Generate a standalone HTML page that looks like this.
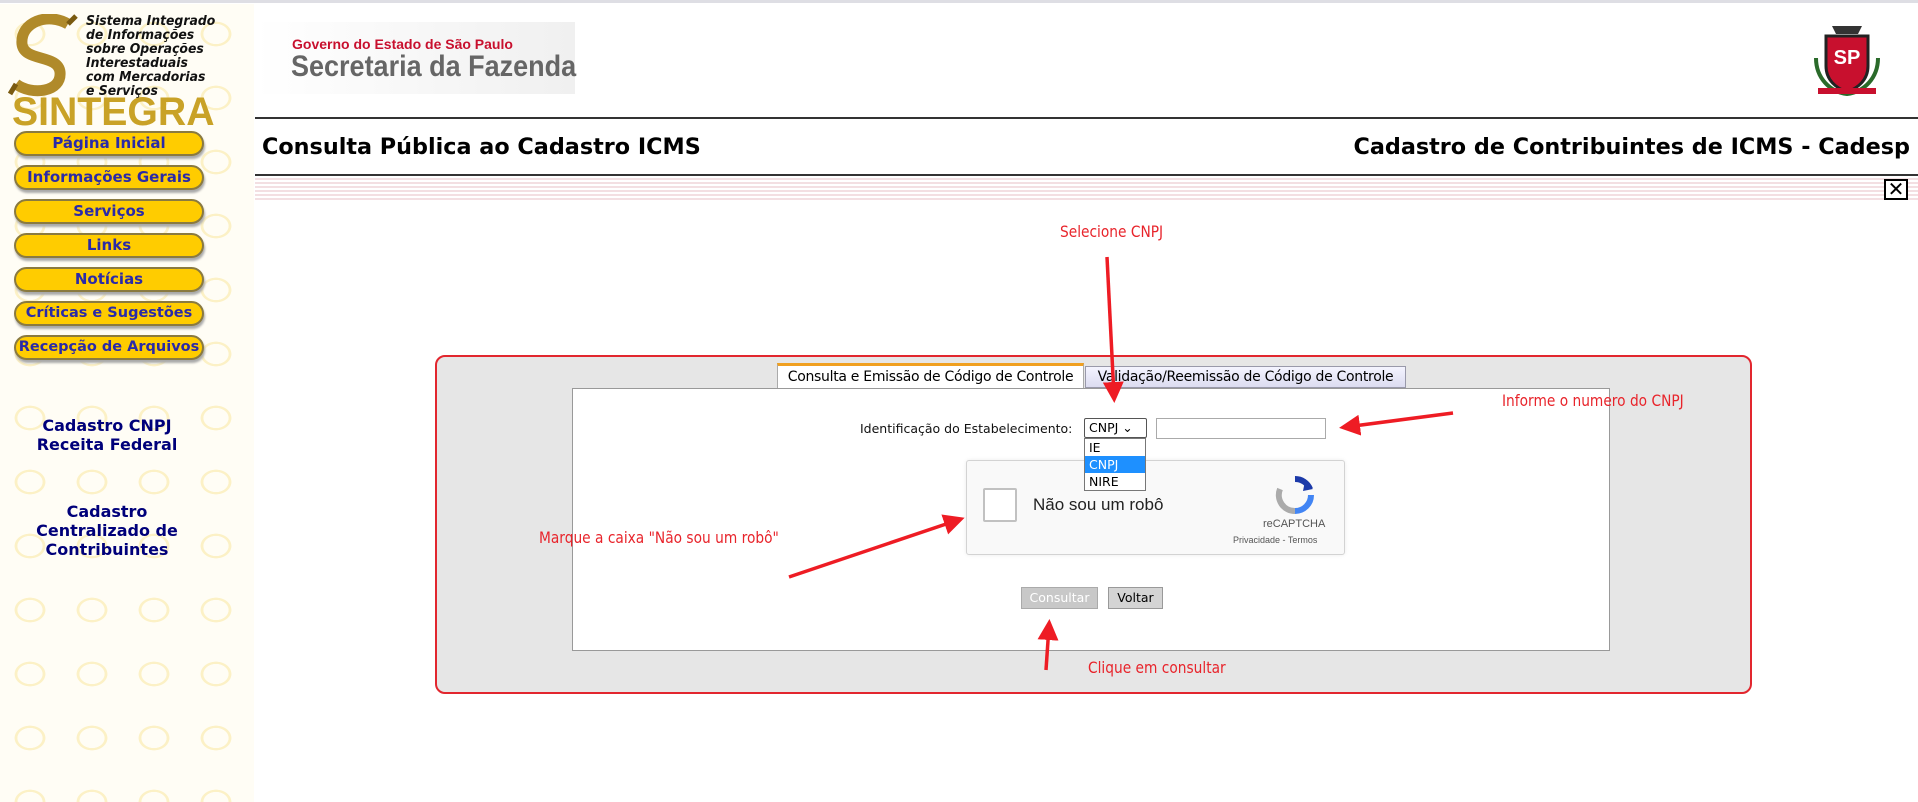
<!DOCTYPE html>
<html><head><meta charset="utf-8"><style>
*{margin:0;padding:0;box-sizing:border-box}
body{width:1918px;height:802px;position:relative;overflow:hidden;background:#fff;font-family:"Liberation Sans","DejaVu Sans",sans-serif}
.a{position:absolute}
#side{left:0;top:4px;width:254px;height:798px;background:#fffdf5;
background-image:radial-gradient(ellipse 20px 16px at 30px 30px,transparent 62%,#fcf1c6 64%,#fcf1c6 76%,transparent 78%);background-size:62px 64px}
.btn{position:absolute;left:14px;width:190px;height:25px;border-radius:13px;background:#ffcc00;border:2px solid #8a7a40;box-shadow:1px 3px 2px #aaa;color:#2a2aa8;font:bold 15px "DejaVu Sans",sans-serif;text-align:center;line-height:21px;overflow:hidden;white-space:nowrap}
.side-t{position:absolute;width:254px;left:-20px;text-align:center;color:#00007a;font:bold 16px "DejaVu Sans",sans-serif;line-height:19px}
.red{color:#e8242b;font:16px "DejaVu Sans",sans-serif;position:absolute;transform:scaleX(.86);transform-origin:left}
</style></head><body>
<div class="a" style="left:0;top:0;width:1918px;height:3px;background:#dedee4"></div>
<div id="side" class="a">
<svg class="a" style="left:8px;top:10px" width="72" height="90" viewBox="0 0 72 90"><path d="M60 10C40 -2 12 8 14 30 16 48 50 40 52 58 54 78 24 82 8 70" fill="none" stroke="#b08a2a" stroke-width="11"/><path d="M60 10L68 2M8 70L2 80" stroke="#7a5a10" stroke-width="5"/></svg>
<div class="a" style="left:86px;top:10px;font:italic bold 13.5px 'DejaVu Sans',sans-serif;line-height:14px;color:#111;transform:scaleX(.92);transform-origin:left">Sistema Integrado<br>de Informações<br>sobre Operações<br>Interestaduais<br>com Mercadorias<br>e Serviços</div>
<div class="a" style="left:12px;top:88px;font:bold 40px 'Liberation Sans',sans-serif;color:#c9a227;line-height:40px;transform:scaleX(.98);transform-origin:left">SINTEGRA</div>
<div class="btn" style="top:127px">Página Inicial</div>
<div class="btn" style="top:161px">Informações Gerais</div>
<div class="btn" style="top:195px">Serviços</div>
<div class="btn" style="top:229px">Links</div>
<div class="btn" style="top:263px">Notícias</div>
<div class="btn" style="top:297px;font-size:14.5px">Críticas e Sugestões</div>
<div class="btn" style="top:331px;font-size:14.5px">Recepção de Arquivos</div>
<div class="side-t" style="top:412px">Cadastro CNPJ<br>Receita Federal</div>
<div class="side-t" style="top:498px">Cadastro<br>Centralizado de<br>Contribuintes</div>
</div>
<div class="a" style="left:255px;top:22px;width:320px;height:72px;background:linear-gradient(90deg,#fff,#f0f0f0)"></div>
<div class="a" style="left:292px;top:36px;color:#c8102e;font:bold 14px 'Liberation Sans',sans-serif">Governo do Estado de São Paulo</div>
<div class="a" style="left:291px;top:50px;color:#666;font:bold 30px 'Liberation Sans',sans-serif;transform:scaleX(.9);transform-origin:left">Secretaria da Fazenda</div>
<svg class="a" style="left:1812px;top:18px" width="70" height="80" viewBox="0 0 70 80"><path d="M20 8h30l-4 8H24z" fill="#333"/><path d="M14 18h42v30c0 14-10 22-21 26C24 70 14 62 14 48z" fill="#c8102e" stroke="#222" stroke-width="3"/><text x="35" y="46" text-anchor="middle" font-family="Liberation Sans" font-weight="bold" font-size="20" fill="#fff">SP</text><path d="M4 40c0 20 14 34 31 36 17-2 31-16 31-36" fill="none" stroke="#2a6a2a" stroke-width="4"/><path d="M6 70h58v6H6z" fill="#c8102e"/></svg>
<div class="a" style="left:255px;top:117px;width:1663px;height:2px;background:#333"></div>
<div class="a" style="left:262px;top:134px;font:bold 22.3px 'DejaVu Sans',sans-serif;color:#000">Consulta Pública ao Cadastro ICMS</div>
<div class="a" style="right:8px;top:134px;font:bold 22.3px 'DejaVu Sans',sans-serif;color:#000">Cadastro de Contribuintes de ICMS - Cadesp</div>
<div class="a" style="left:255px;top:174px;width:1663px;height:2px;background:#333"></div>
<div class="a" style="left:255px;top:176px;width:1663px;height:26px;background:repeating-linear-gradient(#fff 0,#fff 2px,#f3dfe2 2px,#f3dfe2 4px)"></div>
<div class="a" style="left:1884px;top:179px;width:24px;height:21px;border:2px solid #000;background:#fff;font:bold 20px 'DejaVu Sans';text-align:center;line-height:17px">✕</div>
<div class="a" style="left:435px;top:355px;width:1317px;height:339px;background:#e6e6e6;border:2px solid #e2262e;border-radius:10px"></div>
<div class="a" style="left:777px;top:363px;width:307px;height:26px;background:#fff;border:1px solid #aaa;border-top:3px solid #f0a020;border-bottom:none;font:14px 'DejaVu Sans';text-align:center;line-height:22px;letter-spacing:-.3px">Consulta e Emissão de Código de Controle</div>
<div class="a" style="left:1085px;top:366px;width:321px;height:22px;background:linear-gradient(#f4f4ff,#dcdcf0);border:1px solid #99a;font:14px 'DejaVu Sans';text-align:center;line-height:20px;letter-spacing:-.3px">Validação/Reemissão de Código de Controle</div>
<div class="a" style="left:572px;top:388px;width:1038px;height:263px;background:#fff;border:1px solid #999"></div>
<div class="a" style="left:860px;top:421px;font:12.5px 'DejaVu Sans';color:#111">Identificação do Estabelecimento:</div>
<div class="a" style="left:1084px;top:418px;width:63px;height:20px;border:1px solid #555;border-radius:2px;font:12.5px 'DejaVu Sans';padding-left:4px;line-height:18px">CNPJ ⌄</div>
<div class="a" style="left:1156px;top:418px;width:170px;height:21px;border:1px solid #aaa"></div>
<div class="a" style="left:966px;top:460px;width:379px;height:95px;background:#f9f9f9;border:1px solid #d3d3d3;border-radius:3px;box-shadow:0 0 4px rgba(0,0,0,.08)"></div>
<div class="a" style="left:983px;top:488px;width:34px;height:34px;border:2px solid #c1c1c1;border-radius:2px;background:#fff"></div>
<div class="a" style="left:1033px;top:495px;font:17px 'Liberation Sans';color:#222">Não sou um robô</div>
<svg class="a" style="left:1275px;top:475px" width="40" height="40" viewBox="0 0 40 40"><path d="M20 4a16 16 0 0 1 15 10" stroke="#1c3aa9" stroke-width="6" fill="none"/><path d="M30 6l8 8-10 2z" fill="#1c3aa9"/><path d="M36 20a16 16 0 0 1-16 16" stroke="#4285f4" stroke-width="6" fill="none"/><path d="M20 36A16 16 0 0 1 5 14" stroke="#ababab" stroke-width="6" fill="none"/></svg>
<div class="a" style="left:1263px;top:518px;font:11px 'Liberation Sans';color:#555">reCAPTCHA</div>
<div class="a" style="left:1233px;top:535px;font:9px 'Liberation Sans';color:#555">Privacidade - Termos</div>
<div class="a" style="left:1084px;top:438px;width:62px;height:53px;border:1px solid #777;background:#fff;font:12.5px 'DejaVu Sans';line-height:17px;z-index:5"><div style="padding-left:4px">IE</div><div style="padding-left:4px;background:#1e90ff;color:#fff">CNPJ</div><div style="padding-left:4px">NIRE</div></div>
<div class="a" style="left:1021px;top:587px;width:77px;height:22px;background:#c8c8c8;border:1px solid #aaa;color:#fff;font:12.5px 'DejaVu Sans';text-align:center;line-height:20px">Consultar</div>
<div class="a" style="left:1108px;top:587px;width:55px;height:22px;background:#d4d4d4;border:1px solid #999;font:12.5px 'DejaVu Sans';text-align:center;line-height:20px">Voltar</div>
<div class="red" style="left:1060px;top:222px">Selecione CNPJ</div>
<div class="red" style="left:1502px;top:391px">Informe o numero do CNPJ</div>
<div class="red" style="left:539px;top:528px">Marque a caixa "Não sou um robô"</div>
<div class="red" style="left:1088px;top:658px">Clique em consultar</div>
<svg class="a" style="left:0;top:0;z-index:6" width="1918" height="802"><defs><marker id="m" markerWidth="6" markerHeight="6" refX="4" refY="3" orient="auto"><path d="M0 0L6 3L0 6z" fill="#ee1c24"/></marker></defs><g stroke="#ee1c24" stroke-width="3.5" marker-end="url(#m)"><line x1="1107" y1="257" x2="1114" y2="396"/><line x1="1453" y1="413" x2="1346" y2="427"/><line x1="789" y1="577" x2="958" y2="520"/><line x1="1046" y1="670" x2="1049" y2="626"/></g></svg>
</body></html>
